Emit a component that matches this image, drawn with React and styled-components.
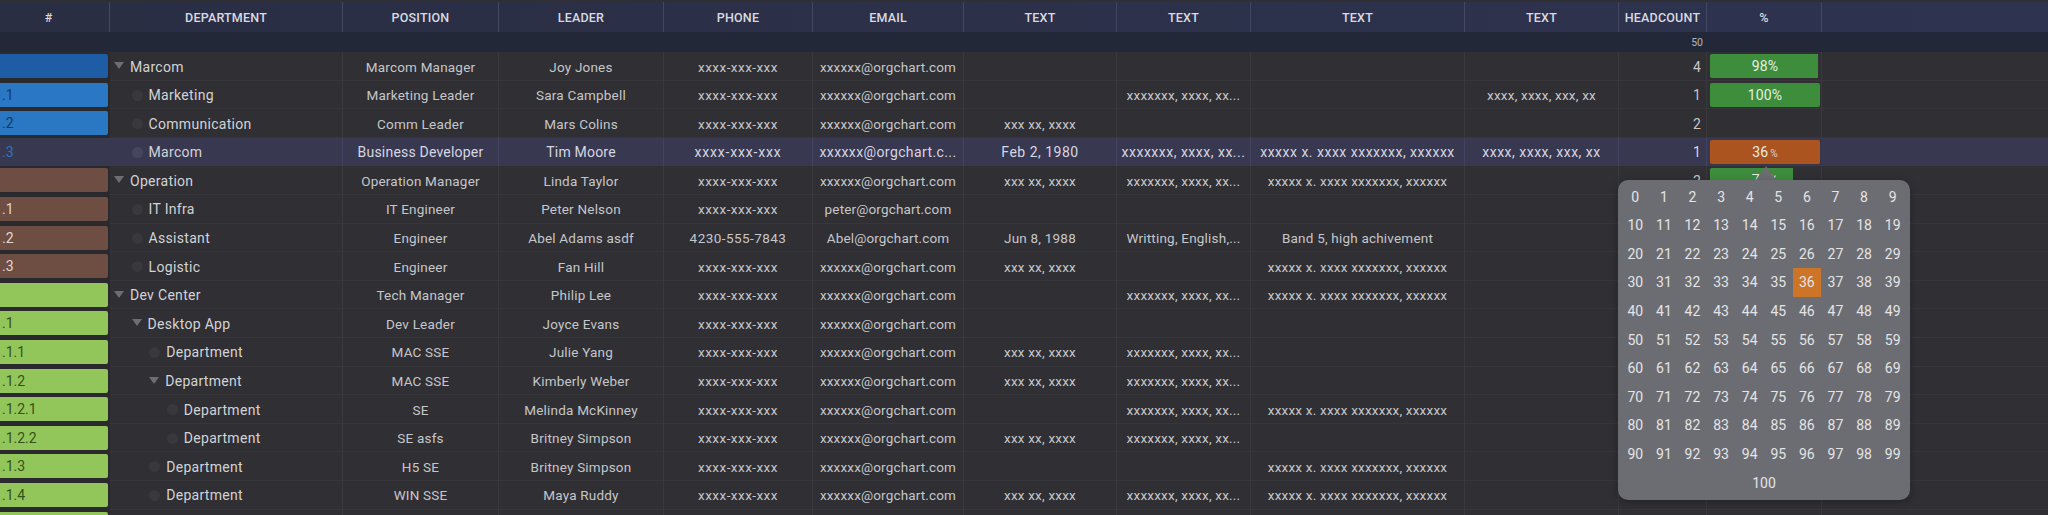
import React from 'react'
import styled, { createGlobalStyle } from 'styled-components'

const COLS = '110px 233px 156px 165px 149px 151px 153px 134px 214px 154px 88px 115px 1fr'

const GlobalStyle = createGlobalStyle`
html, body {
  margin: 0;
  height: 515px;
  overflow: hidden;
  background: #2f2f34;
}
* { box-sizing: border-box; }
`

const Page = styled.div`
position: relative;
width: 2048px;
height: 515px;
overflow: hidden;
background: #2f2f34;
padding-top: 2px;
font-family: Roboto, "Liberation Sans", sans-serif;
color: #cfcfd1;
`

const HeaderRow = styled.div`
display: grid;
grid-template-columns: ${COLS};
height: 30px;
background: linear-gradient(90deg, #2a2e43, #2e3350);
`

const HeaderCell = styled.div`
display: flex;
align-items: center;
justify-content: center;
padding-right: ${({ $hash }) => ($hash ? '12px' : '0')};
font-size: 12.5px;
font-weight: 500;
letter-spacing: 0.2px;
color: #d9dae0;
border-right: 1px solid #434860;
&:last-child { border-right: none; }
`

const TotalRow = styled.div`
display: grid;
grid-template-columns: ${COLS};
height: 20px;
background: #222838;
`

const TotalCell = styled.div`
grid-column: 11;
display: flex;
align-items: center;
justify-content: flex-end;
padding-right: 4px;
font-size: 10.5px;
color: #b4b6bc;
`

const Row = styled.div`
display: grid;
grid-template-columns: ${COLS};
height: 28.6px;
background: ${({ $active }) => ($active ? '#393851' : 'transparent')};
box-shadow: ${({ $active }) => ($active ? 'none' : 'inset 0 -1px 0 #36363b')};
`

const Cell = styled.div`
display: flex;
align-items: center;
justify-content: center;
min-width: 0;
white-space: nowrap;
font-size: ${({ $active }) => ($active ? '14px' : '13.5px')};
letter-spacing: ${({ $spacing }) => $spacing ?? 0.2}px;
color: ${({ $active }) => ($active ? '#d6d6e2' : '#c6c6c9')};
border-right: 1px solid ${({ $active }) => ($active ? '#434260' : '#38383d')};
&:last-child { border-right: none; }
`

const NumberCell = styled(Cell)`
justify-content: flex-end;
padding-right: 5px;
font-size: 14px;
`

const ChipCell = styled.div`
display: flex;
align-items: center;
padding: 2px 2px 3px 0;
background: ${({ $active }) => ($active ? 'transparent' : '#2a2a2e')};
`

const Chip = styled.div`
flex: 1;
height: 24px;
display: flex;
align-items: center;
padding-left: 2px;
font-size: 14px;
color: ${({ $text }) => $text};
background: ${({ $color }) => $color};
border-radius: 0 2px 2px 0;
`

const TreeCell = styled(Cell)`
justify-content: flex-start;
padding-left: ${({ $depth }) => 3 + $depth * 17.6}px;
font-size: 14px;
letter-spacing: 0.3px;
color: #d3d3d6;
`

const Caret = styled.span`
width: 0;
height: 0;
margin: 0 6px 2px 1px;
border-left: 5.5px solid transparent;
border-right: 5.5px solid transparent;
border-top: 7px solid #6d6d72;
flex: none;
`

const Dot = styled.span`
width: 11px;
height: 11px;
margin: 0 6px 0 1px;
border-radius: 50%;
background: ${({ $active }) => ($active ? '#47465e' : '#38383d')};
flex: none;
`

const BarCell = styled.div`
display: flex;
align-items: center;
padding: 0 0 1px 3px;
border-right: 1px solid #38383d;
`

const Bar = styled.div`
width: 110px;
height: 24px;
display: flex;
align-items: center;
justify-content: center;
gap: 2px;
font-size: 14px;
letter-spacing: 0.2px;
color: #e7eee2;
background: linear-gradient(90deg, ${({ $color }) => $color} ${({ $fill }) => $fill}%, transparent ${({ $fill }) => $fill}%);
border-radius: 2px;
`

const Unit = styled.span`
font-size: 10px;
margin-top: 3px;
opacity: 0.8;
`

const PickerArrow = styled.div`
position: absolute;
left: 1756px;
top: 166px;
width: 0;
height: 0;
border-left: 10px solid transparent;
border-right: 10px solid transparent;
border-bottom: 14px solid #6c6d72;
`

const Picker = styled.div`
position: absolute;
left: 1618px;
top: 180px;
width: 292px;
height: 320px;
padding: 2.4px 3px 0;
background: #6c6d72;
border-radius: 10px;
display: grid;
grid-template-columns: repeat(10, 28.6px);
grid-auto-rows: 28.6px;
box-shadow: 0 2px 8px rgba(0, 0, 0, 0.25);
`

const PickerItem = styled.div`
display: flex;
align-items: center;
justify-content: center;
font-size: 14px;
color: #e4e4e6;
background: ${({ $selected }) => ($selected ? '#cc7428' : 'transparent')};
grid-column: ${({ $wide }) => ($wide ? '1 / -1' : 'auto')};
`

const X1 = 'xxxxxxx, xxxx, xx...'
const X2 = 'xxxxx x. xxxx xxxxxxx, xxxxxx'
const X3 = 'xxxx, xxxx, xxx, xx'
const DATE = 'xxx xx, xxxx'
const MAIL = 'xxxxxx@orgchart.com'
const PHONE = 'xxxx-xxx-xxx'

const BLUE = { color: '#2a78c4', text: '#143a60' }
const BROWN = { color: '#6e4e42', text: '#e2d6d0' }
const GREEN = { color: '#93c65a', text: '#33521a' }

const headers = ['#', 'DEPARTMENT', 'POSITION', 'LEADER', 'PHONE', 'EMAIL', 'TEXT', 'TEXT', 'TEXT', 'TEXT', 'HEADCOUNT', '%', '']

const rows = [
  { no: '', chip: { color: '#1f5ca6', text: '#fff' }, depth: 0, open: true, name: 'Marcom', pos: 'Marcom Manager', lead: 'Joy Jones', count: 4, bar: { fill: 98, c: '#3d8d3d', t: '98%' } },
  { no: '.1', chip: BLUE, depth: 1, name: 'Marketing', pos: 'Marketing Leader', lead: 'Sara Campbell', t2: X1, t4: X3, count: 1, bar: { fill: 100, c: '#3d8d3d', t: '100%' } },
  { no: '.2', chip: BLUE, depth: 1, name: 'Communication', pos: 'Comm Leader', lead: 'Mars Colins', t1: DATE, count: 2 },
  { no: '.3', chip: { color: 'transparent', text: '#2f74ba' }, depth: 1, active: true, name: 'Marcom', pos: 'Business Developer', lead: 'Tim Moore', mail: 'xxxxxx@orgchart.c...', t1: 'Feb 2, 1980', t2: X1, t3: X2, t4: X3, count: 1, bar: { fill: 100, c: '#ab5420', t: '36', unit: '%' } },
  { no: '', chip: BROWN, depth: 0, open: true, name: 'Operation', pos: 'Operation Manager', lead: 'Linda Taylor', t1: DATE, t2: X1, t3: X2, count: 2, bar: { fill: 75, c: '#3d8d3d', t: '75%' } },
  { no: '.1', chip: BROWN, depth: 1, name: 'IT Infra', pos: 'IT Engineer', lead: 'Peter Nelson', mail: 'peter@orgchart.com' },
  { no: '.2', chip: BROWN, depth: 1, name: 'Assistant', pos: 'Engineer', lead: 'Abel Adams asdf', phone: '4230-555-7843', mail: 'Abel@orgchart.com', t1: 'Jun 8, 1988', t2: 'Writting, English,...', t3: 'Band 5, high achivement' },
  { no: '.3', chip: BROWN, depth: 1, name: 'Logistic', pos: 'Engineer', lead: 'Fan Hill', t1: DATE, t3: X2 },
  { no: '', chip: GREEN, depth: 0, open: true, name: 'Dev Center', pos: 'Tech Manager', lead: 'Philip Lee', t2: X1, t3: X2 },
  { no: '.1', chip: GREEN, depth: 1, open: true, name: 'Desktop App', pos: 'Dev Leader', lead: 'Joyce Evans' },
  { no: '.1.1', chip: GREEN, depth: 2, name: 'Department', pos: 'MAC SSE', lead: 'Julie Yang', t1: DATE, t2: X1 },
  { no: '.1.2', chip: GREEN, depth: 2, open: true, name: 'Department', pos: 'MAC SSE', lead: 'Kimberly Weber', t1: DATE, t2: X1 },
  { no: '.1.2.1', chip: GREEN, depth: 3, name: 'Department', pos: 'SE', lead: 'Melinda McKinney', t2: X1, t3: X2 },
  { no: '.1.2.2', chip: GREEN, depth: 3, name: 'Department', pos: 'SE asfs', lead: 'Britney Simpson', t1: DATE, t2: X1 },
  { no: '.1.3', chip: GREEN, depth: 2, name: 'Department', pos: 'H5 SE', lead: 'Britney Simpson', t3: X2 },
  { no: '.1.4', chip: GREEN, depth: 2, name: 'Department', pos: 'WIN SSE', lead: 'Maya Ruddy', t1: DATE, t2: X1, t3: X2 },
  { no: '', chip: GREEN, depth: 1, name: '', pos: '', lead: '', blank: true },
]

const TableRow = ({ row }) => {
  const { active } = row
  const textSpacing = active ? 0.5 : 0.2
  return (
    <Row $active={active}>
      <ChipCell $active={active}><Chip $color={row.chip.color} $text={row.chip.text}>{row.no}</Chip></ChipCell>
      <TreeCell $depth={row.depth} $active={active}>
        {!row.blank && (row.open ? <Caret /> : <Dot $active={active} />)}
        {row.name}
      </TreeCell>
      <Cell $active={active}>{row.pos}</Cell>
      <Cell $active={active}>{row.lead}</Cell>
      <Cell $active={active} $spacing={active ? 0.8 : 0.45}>{row.blank ? '' : row.phone || PHONE}</Cell>
      <Cell $active={active} $spacing={active ? 0.4 : 0.15}>{row.blank ? '' : row.mail || MAIL}</Cell>
      <Cell $active={active} $spacing={textSpacing}>{row.t1}</Cell>
      <Cell $active={active} $spacing={textSpacing}>{row.t2}</Cell>
      <Cell $active={active} $spacing={textSpacing}>{row.t3}</Cell>
      <Cell $active={active} $spacing={textSpacing}>{row.t4}</Cell>
      <NumberCell $active={active}>{row.count}</NumberCell>
      <BarCell>
        {row.bar && (
          <Bar $color={row.bar.c} $fill={row.bar.fill}>
            {row.bar.t}
            {row.bar.unit && <Unit>{row.bar.unit}</Unit>}
          </Bar>
        )}
      </BarCell>
      <Cell />
    </Row>
  )
}

const App = () => (
  <Page>
    <GlobalStyle />
    <HeaderRow>
      {headers.map((h, i) => <HeaderCell key={i} $hash={h === '#'}>{h}</HeaderCell>)}
    </HeaderRow>
    <TotalRow><TotalCell>50</TotalCell></TotalRow>
    {rows.map((row, i) => <TableRow key={i} row={row} />)}
    <PickerArrow />
    <Picker>
      {Array.from({ length: 100 }, (_, n) => (
        <PickerItem key={n} $selected={n === 36}>{n}</PickerItem>
      ))}
      <PickerItem $wide>100</PickerItem>
    </Picker>
  </Page>
)

export default App
